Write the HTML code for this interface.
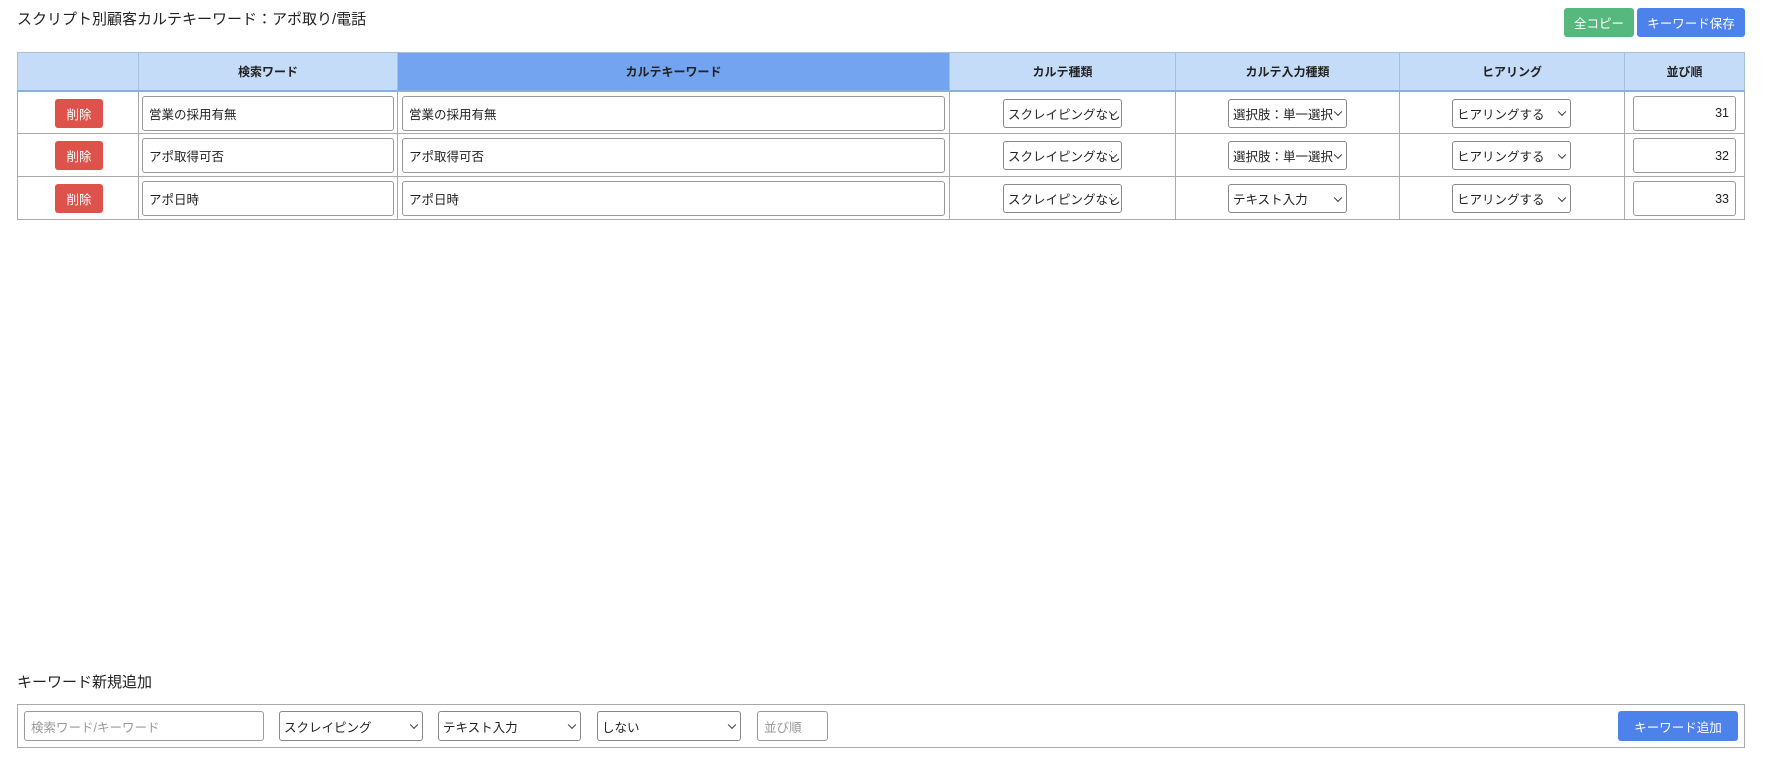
<!DOCTYPE html>
<html><head><meta charset="utf-8"><style>
*{box-sizing:border-box}
body{margin:0;width:1776px;height:780px;background:#fff;font-family:"Liberation Sans","Noto Sans CJK JP",sans-serif;color:#222;position:relative;overflow:hidden}
.a{position:absolute}
.title{left:17px;top:8px;font-size:15px}
.btn{position:absolute;color:#fff;font-size:12.5px;display:flex;align-items:center;justify-content:center;border-radius:3px}
table{position:absolute;left:17px;top:52px;width:1728px;border-collapse:collapse;font-size:12.5px;table-layout:fixed}
th{background:#c5dcf9;height:38px;border:1px solid #a9bfd9;border-bottom:2px solid #8aaee0;font-size:12px;font-weight:bold}
th.k{background:#72a4ef}
td{border:1px solid #aaa;height:43px;position:relative;padding:0}
.in{position:absolute;border:1px solid #999;border-radius:3px;background:#fff;display:flex;align-items:center;padding:0 6px;font-size:12.5px}
.sel{position:absolute;border:1px solid #888;border-radius:3px;background:#fff;display:flex;align-items:center;padding:0 16px 0 4px;font-size:12.5px;white-space:nowrap;overflow:hidden}
.sel:after{content:"";position:absolute;right:5px;top:50%;width:5px;height:5px;border-right:1.5px solid #333;border-bottom:1.5px solid #333;transform:translateY(-70%) rotate(45deg);background:#fff}
.del{position:absolute;left:37px;top:7px;width:48px;height:29px;background:#dd534c;color:#fff;border-radius:3px;display:flex;align-items:center;justify-content:center;font-size:12.5px}
</style></head><body>
<div class="a title">スクリプト別顧客カルテキーワード：アポ取り/電話</div>
<div class="btn" style="left:1564px;top:8px;width:70px;height:29px;background:#56b87c">全コピー</div>
<div class="btn" style="left:1637px;top:8px;width:108px;height:29px;background:#4d82ea">キーワード保存</div>
<table>
<tr><th style="width:121px"></th><th style="width:259px">検索ワード</th><th class="k" style="width:552px">カルテキーワード</th><th style="width:226px">カルテ種類</th><th style="width:224px">カルテ入力種類</th><th style="width:225px">ヒアリング</th><th>並び順</th></tr>
<tr><td><div class="del">削除</div></td><td><div class="in" style="left:3px;top:4px;right:3px;height:35px">営業の採用有無</div></td><td><div class="in" style="left:4px;top:4px;right:4px;height:35px">営業の採用有無</div></td><td><div class="sel" style="left:53px;top:7px;width:119px;height:29px">スクレイピングなし</div></td><td><div class="sel" style="left:52px;top:7px;width:119px;height:29px">選択肢：単一選択</div></td><td><div class="sel" style="left:52px;top:7px;width:119px;height:29px">ヒアリングする</div></td><td><div class="in" style="left:8px;top:4px;right:8px;height:35px;justify-content:flex-end">31</div></td></tr>
<tr><td><div class="del">削除</div></td><td><div class="in" style="left:3px;top:4px;right:3px;height:35px">アポ取得可否</div></td><td><div class="in" style="left:4px;top:4px;right:4px;height:35px">アポ取得可否</div></td><td><div class="sel" style="left:53px;top:7px;width:119px;height:29px">スクレイピングなし</div></td><td><div class="sel" style="left:52px;top:7px;width:119px;height:29px">選択肢：単一選択</div></td><td><div class="sel" style="left:52px;top:7px;width:119px;height:29px">ヒアリングする</div></td><td><div class="in" style="left:8px;top:4px;right:8px;height:35px;justify-content:flex-end">32</div></td></tr>
<tr><td><div class="del">削除</div></td><td><div class="in" style="left:3px;top:4px;right:3px;height:35px">アポ日時</div></td><td><div class="in" style="left:4px;top:4px;right:4px;height:35px">アポ日時</div></td><td><div class="sel" style="left:53px;top:7px;width:119px;height:29px">スクレイピングなし</div></td><td><div class="sel" style="left:52px;top:7px;width:119px;height:29px">テキスト入力</div></td><td><div class="sel" style="left:52px;top:7px;width:119px;height:29px">ヒアリングする</div></td><td><div class="in" style="left:8px;top:4px;right:8px;height:35px;justify-content:flex-end">33</div></td></tr>
</table>
<div class="a" style="left:17px;top:671px;font-size:15px">キーワード新規追加</div>
<div class="a" style="left:17px;top:704px;width:1728px;height:44px;border:1px solid #aaa"></div>
<div class="in" style="left:24px;top:711px;width:240px;height:30px;color:#999">検索ワード/キーワード</div>
<div class="sel" style="left:279px;top:711px;width:144px;height:30px">スクレイピング</div>
<div class="sel" style="left:438px;top:711px;width:143px;height:30px">テキスト入力</div>
<div class="sel" style="left:597px;top:711px;width:144px;height:30px">しない</div>
<div class="in" style="left:757px;top:711px;width:71px;height:30px;color:#999">並び順</div>
<div class="btn" style="left:1618px;top:711px;width:120px;height:30px;background:#4d82ea">キーワード追加</div>
</body></html>
